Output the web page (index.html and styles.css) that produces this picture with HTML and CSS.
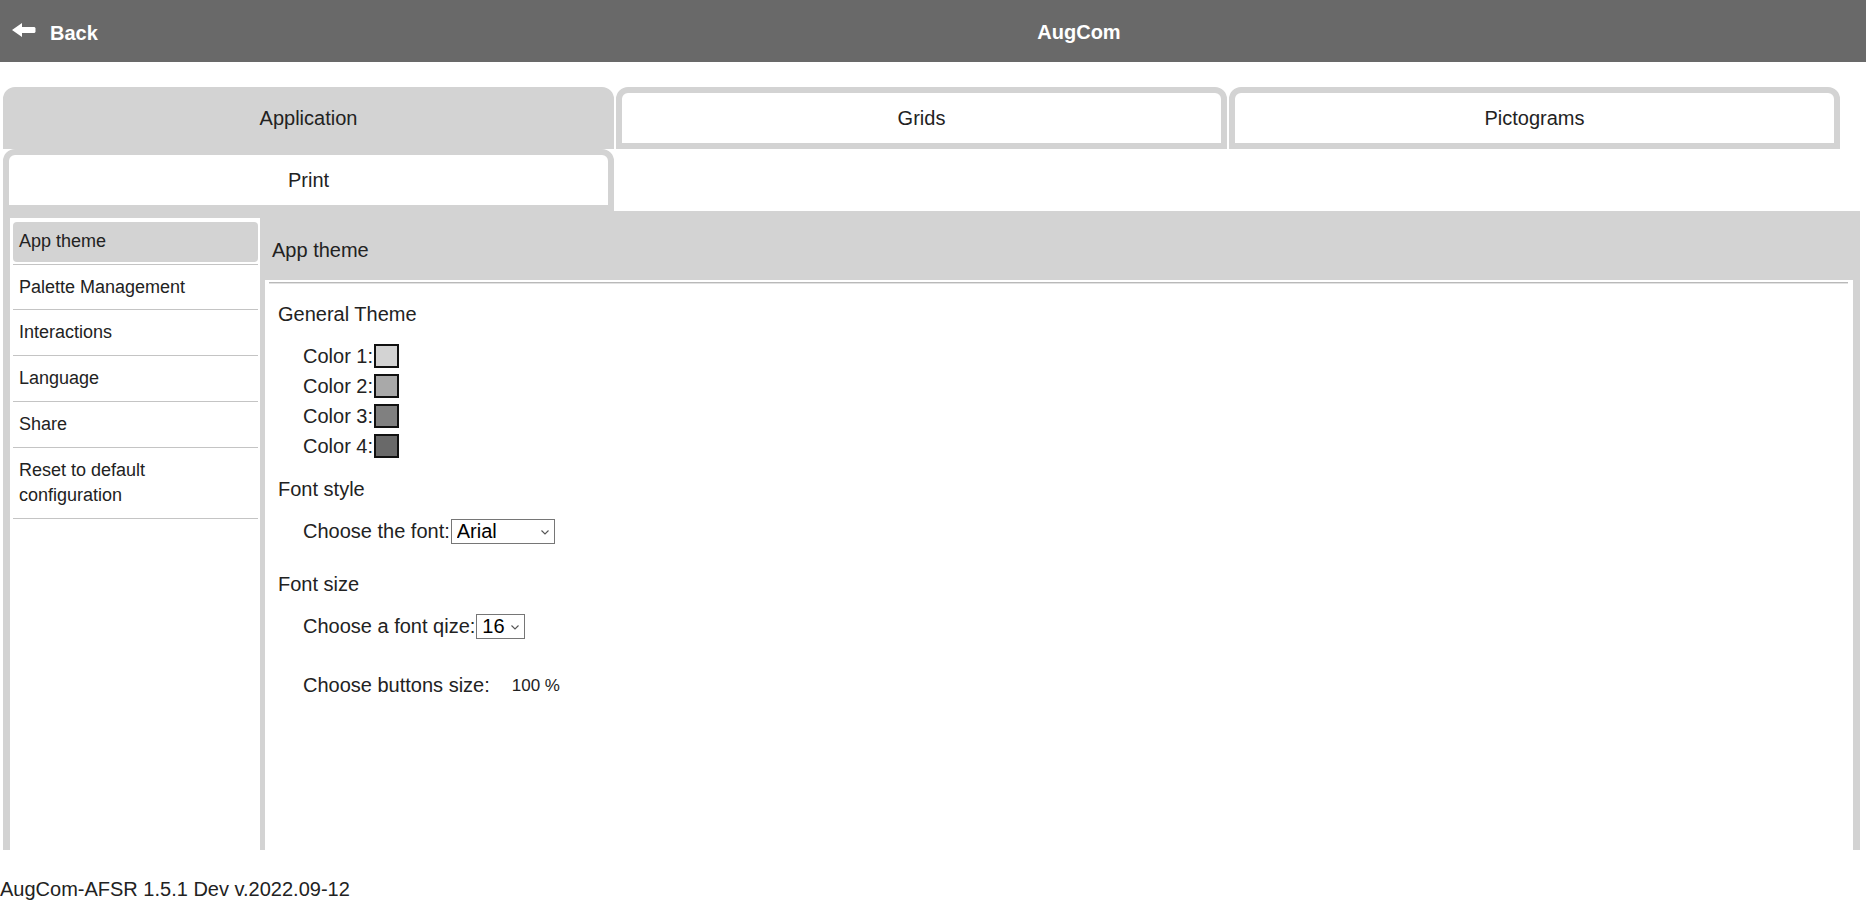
FILE: index.html
```html
<!DOCTYPE html>
<html lang="en">
<head>
<meta charset="utf-8">
<title>AugCom</title>
<link rel="stylesheet" href="styles.css">
</head>
<body>
<header class="topbar">
  <div class="back">
    <svg class="back-icon" width="24" height="14" viewBox="0 0 24 14" aria-hidden="true">
      <polygon points="0,7 10,0 10,4 22.5,4 23.5,5 23.5,9 22.5,10 10,10 10,14" fill="#fff"/>
    </svg>
    <span class="back-label">Back</span>
  </div>
  <div class="title">AugCom</div>
</header>

<nav class="tabs">
  <div class="tab tab-active">Application</div>
  <div class="tab">Grids</div>
  <div class="tab">Pictograms</div>
  <div class="tab">Print</div>
</nav>

<section class="panel">
  <aside class="sidebar">
    <div class="nav-item"><div class="nav-label nav-selected">App theme</div></div>
    <div class="nav-item"><div class="nav-label">Palette Management</div></div>
    <div class="nav-item"><div class="nav-label">Interactions</div></div>
    <div class="nav-item"><div class="nav-label">Language</div></div>
    <div class="nav-item"><div class="nav-label">Share</div></div>
    <div class="nav-item"><div class="nav-label">Reset to default<br>configuration</div></div>
  </aside>
  <div class="main">
    <div class="main-header">App theme</div>
    <div class="main-body">
      <div class="rule"></div>
      <div class="section-title first">General Theme</div>
      <div class="color-list">
        <div class="color-row">Color 1:<span class="swatch swatch-1"></span></div>
        <div class="color-row">Color 2:<span class="swatch swatch-2"></span></div>
        <div class="color-row">Color 3:<span class="swatch swatch-3"></span></div>
        <div class="color-row">Color 4:<span class="swatch swatch-4"></span></div>
      </div>
      <div class="section-title font-style">Font style</div>
      <div class="field-row row-font">
        <span>Choose the font:</span>
        <span class="select-wrap select-font">
          <select class="select"><option>Arial</option></select>
          <svg class="chev" width="8" height="5" viewBox="0 0 8 5" aria-hidden="true"><polyline points="0.5,0.5 4,4 7.5,0.5" fill="none" stroke="#555" stroke-width="1.1"/></svg>
        </span>
      </div>
      <div class="section-title font-size">Font size</div>
      <div class="field-row row-size">
        <span>Choose a font qize:</span>
        <span class="select-wrap select-size">
          <select class="select"><option>16</option></select>
          <svg class="chev" width="8" height="5" viewBox="0 0 8 5" aria-hidden="true"><polyline points="0.5,0.5 4,4 7.5,0.5" fill="none" stroke="#555" stroke-width="1.1"/></svg>
        </span>
      </div>
      <div class="field-row row-buttons">
        <span>Choose buttons size:</span>
        <span class="percent">100 %</span>
      </div>
    </div>
  </div>
</section>

<footer class="footer">AugCom-AFSR 1.5.1 Dev v.2022.09-12</footer>
</body>
</html>
```

FILE: styles.css
```css
* { box-sizing: border-box; }

html, body {
  margin: 0;
  padding: 0;
  background: #fff;
}

body {
  font-family: "Liberation Sans", Arial, sans-serif;
  font-size: 20px;
  color: #222;
  width: 1866px;
  height: 901px;
  overflow: hidden;
}

/* Top bar */
.topbar {
  height: 62px;
  background: #696969;
  display: flex;
  align-items: center;
  color: #fff;
  font-weight: bold;
}

.back {
  width: 292px;
  display: flex;
  align-items: center;
  padding-left: 12px;
}

.back-icon {
  display: block;
  margin-top: -3px;
}

.back-label {
  margin-left: 14px;
  margin-top: 5px;
}

.title {
  flex: 1;
  text-align: center;
  margin-top: 2px;
}

/* Tabs */
.tabs {
  margin-top: 25px;
  padding-left: 3px;
  display: grid;
  grid-template-columns: repeat(3, 611px);
  column-gap: 2px;
}

.tab {
  height: 62px;
  border: 6px solid #d3d3d3;
  border-radius: 12px 12px 0 0;
  background: #fff;
  display: flex;
  align-items: center;
  justify-content: center;
  color: #222;
}

.tab-active {
  background: #d3d3d3;
}

/* Panel */
.panel {
  margin-left: 3px;
  width: 1857px;
  height: 639px;
  background: #d3d3d3;
  padding: 7px 7px 0 7px;
  display: flex;
  gap: 5px;
  overflow: hidden;
}

.sidebar {
  width: 250px;
  flex: none;
  background: #fff;
  padding: 1px 2px 0 3px;
  font-size: 18px;
}

.nav-item {
  padding: 3px 0 2px;
  border-bottom: 1px solid #c4c4c4;
}

.nav-label {
  padding: 7px 6px;
  line-height: 25.7px;
  border-radius: 4px;
}

.nav-selected {
  background: #d3d3d3;
}

.main {
  flex: 1;
  display: flex;
  flex-direction: column;
}

.main-header {
  height: 62px;
  flex: none;
  display: flex;
  align-items: center;
  padding-left: 7px;
  padding-top: 2px;
}

.main-body {
  flex: 1;
  background: #fff;
  padding: 2px 5px 0 4px;
}

.rule {
  height: 2px;
  border-top: 1px solid #b9b9b9;
  border-bottom: 1px solid #e2e2e2;
}

.section-title {
  padding-left: 9px;
  line-height: 23px;
}

.section-title.first { margin-top: 19px; }
.section-title.font-style { margin-top: 17px; }
.section-title.font-size { margin-top: 29px; }

.color-list {
  margin-top: 15px;
  padding-left: 34px;
}

.color-row {
  height: 30px;
  display: flex;
  align-items: center;
}

.swatch {
  display: inline-block;
  width: 25px;
  height: 24px;
  border: 2px solid #111;
  margin-left: 1px;
}

.swatch-1 { background: #d3d3d3; }
.swatch-2 { background: #a9a9a9; }
.swatch-3 { background: #808080; }
.swatch-4 { background: #696969; }

.field-row {
  padding-left: 34px;
  display: flex;
  align-items: center;
  height: 25px;
}

.row-font { margin-top: 18px; }
.row-size { margin-top: 18px; }
.row-buttons { margin-top: 34px; }

.select-wrap {
  position: relative;
  display: inline-block;
  margin-left: 1px;
}

.select {
  -webkit-appearance: none;
  appearance: none;
  display: block;
  height: 25px;
  border: 1px solid #767676;
  border-radius: 0;
  background: #fff;
  color: #000;
  font-family: "Liberation Sans", Arial, sans-serif;
  font-size: 20px;
  line-height: 23px;
  padding: 0 0 0 5px;
  margin: 0;
}

.select-font .select { width: 104px; }
.select-size .select { width: 49px; }

.chev {
  position: absolute;
  right: 6px;
  top: 11px;
  display: block;
  pointer-events: none;
}

.percent {
  font-size: 17px;
  margin-left: 22px;
  margin-top: 1px;
}

/* Footer */
.footer {
  margin-top: 28px;
  line-height: 23px;
  padding-left: 0;
  color: #222;
}
```
